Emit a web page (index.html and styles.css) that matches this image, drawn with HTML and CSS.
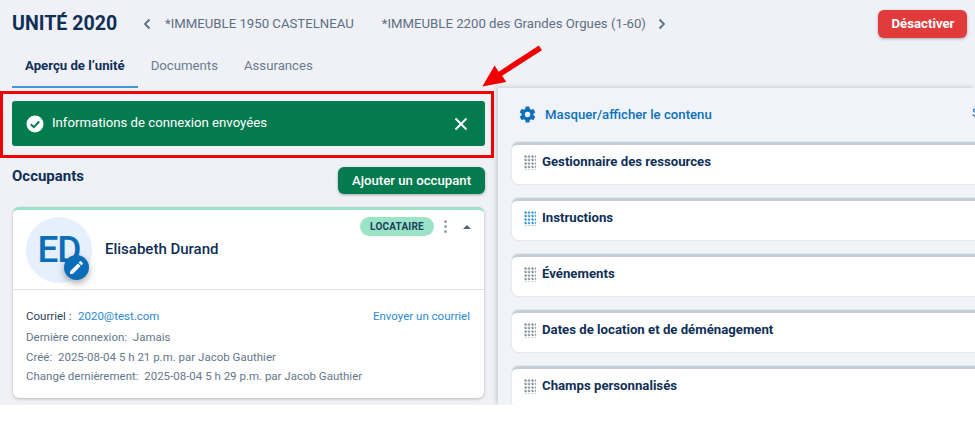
FILE: index.html
```html
<!DOCTYPE html>
<html lang="fr">
<head>
<meta charset="utf-8">
<title>Unité 2020</title>
<link rel="stylesheet" href="styles.css">
</head>
<body>
<div class="page">
  <header class="top">
    <h1 class="title">UNITÉ 2020</h1>
    <svg class="chev chev-l" viewBox="0 0 10 12"><path d="M7.5 1.5 3 6l4.500 4.500" /></svg>
    <span class="crumb crumb-a">*IMMEUBLE 1950 CASTELNEAU</span>
    <span class="crumb crumb-b">*IMMEUBLE 2200 des Grandes Orgues (1-60)</span>
    <svg class="chev chev-r" viewBox="0 0 10 12"><path d="M2.500 1.500 7 6l-4.500 4.500" /></svg>
    <button class="btn-red">Désactiver</button>
  </header>
  <nav class="tabs">
    <a class="tab tab-active">Aperçu de l’unité</a>
    <a class="tab">Documents</a>
    <a class="tab">Assurances</a>
  </nav>
  <main class="main">
    <section class="left">
      <div class="alert">
        <svg class="alert-check" viewBox="0 0 18 18"><circle cx="9" cy="9" r="8.500" fill="#fff"/><path d="M4.800 9.300 7.800 12.200 13.200 6.500" fill="none" stroke="#047a4f" stroke-width="2"/></svg>
        <span class="alert-text">Informations de connexion envoyées</span>
        <svg class="alert-x" viewBox="0 0 14 14"><path d="M1.500 1.500 12.500 12.500M12.500 1.500 1.500 12.500" fill="none" stroke="#fff" stroke-width="2"/></svg>
      </div>
      <div class="occ-head">
        <h2 class="occ-title">Occupants</h2>
        <button class="btn-green">Ajouter un occupant</button>
      </div>
      <article class="card">
        <div class="card-top">
          <div class="avatar">ED
            <span class="edit"><svg viewBox="0 0 24 24"><path fill="#fff" d="M3 17.250V21h3.750L17.810 9.940l-3.750-3.750L3 17.250zM20.710 7.040a1 1 0 0 0 0-1.410l-2.340-2.340a1 1 0 0 0-1.410 0l-1.830 1.830 3.750 3.750 1.830-1.830z"/></svg></span>
          </div>
          <div class="name">Elisabeth Durand</div>
          <div class="card-tools">
            <span class="badge">LOCATAIRE</span>
            <span class="kebab"><i></i><i></i><i></i></span>
            <span class="caret"></span>
          </div>
        </div>
        <div class="card-body">
          <div class="row-mail">
            <span class="mail-label">Courriel :</span>
            <a class="link mail-value">2020@test.com</a>
            <a class="link mail-send">Envoyer un courriel</a>
          </div>
          <div class="meta">Dernière connexion:&nbsp; Jamais</div>
          <div class="meta">Créé:&nbsp; 2025-08-04 5 h 21 p.m. par Jacob Gauthier</div>
          <div class="meta">Changé dernièrement:&nbsp; 2025-08-04 5 h 29 p.m. par Jacob Gauthier</div>
        </div>
      </article>
    </section>
    <section class="right">
      <div class="toggle-row">
        <svg class="gear" viewBox="0 0 24 24"><path fill="#0c6fb8" fill-rule="evenodd" d="M19.430 12.980c.04-.32.070-.64.070-.98s-.03-.66-.07-.98l2.110-1.650c.19-.15.240-.42.120-.64l-2-3.460c-.12-.22-.39-.3-.61-.22l-2.490 1c-.52-.4-1.080-.73-1.690-.98l-.38-2.650A.49.49 0 0 0 14 2h-4c-.25 0-.46.18-.49.42l-.38 2.650c-.61.25-1.170.59-1.690.98l-2.490-1c-.23-.09-.49 0-.61.22l-2 3.460c-.13.22-.07.49.12.64l2.110 1.650c-.04.32-.07.65-.07.98s.03.66.07.98l-2.110 1.650c-.19.15-.24.42-.12.64l2 3.460c.12.22.39.3.61.22l2.490-1c.52.4 1.080.73 1.690.98l.38 2.650c.03.24.24.42.49.42h4c.25 0 .46-.18.49-.42l.38-2.650c.61-.25 1.170-.59 1.690-.98l2.490 1c.23.09.49 0 .61-.22l2-3.460c.12-.22.07-.49-.12-.64l-2.110-1.650zM12 15.500a3.500 3.500 0 1 1 0-7 3.500 3.500 0 0 1 0 7z"/></svg>
        <span class="toggle-text">Masquer/afficher le contenu</span>
        <span class="toggle-extra">S</span>
      </div>
      <div class="panel"><span class="grip"></span><span class="panel-title">Gestionnaire des ressources</span></div>
      <div class="panel"><span class="grip grip-blue"></span><span class="panel-title">Instructions</span></div>
      <div class="panel"><span class="grip"></span><span class="panel-title">Événements</span></div>
      <div class="panel"><span class="grip"></span><span class="panel-title">Dates de location et de déménagement</span></div>
      <div class="panel"><span class="grip"></span><span class="panel-title">Champs personnalisés</span></div>
    </section>
  </main>
  <div class="callout-box"></div>
  <svg class="callout-arrow" viewBox="0 0 70 50"><path fill="#f00000" d="M61.500 0.500 64.800 5.600 21.600 33.400 26 40.300 0 45 13.400 22.200 17.800 29z"/></svg>
</div>
</body>
</html>
```
FILE: styles.css
```css
* { box-sizing: border-box; }
html, body { margin: 0; background: #fff; }
body { font-family: Roboto, "Liberation Sans", sans-serif; }
.page {
  position: relative;
  width: 975px;
  height: 405px;
  overflow: hidden;
  background: #f0f1f6;
  display: flex;
  flex-direction: column;
}
.top {
  height: 47px;
  flex: none;
  display: flex;
  align-items: center;
  padding-left: 12px;
  color: #5d6f83;
}
.title {
  margin: 0;
  font-size: 19.600px;
  line-height: 24px;
  font-weight: 700;
  color: #0f2f57;
  width: 130px;
}
.chev { width: 10px; height: 12px; flex: none; }
.chev path { fill: none; stroke: #5d6f83; stroke-width: 1.800; }
.crumb { font-size: 13.200px; font-weight: 400; line-height: 20px; white-space: nowrap; }
.crumb-a { margin-left: 13px; }
.crumb-b { margin-left: 28px; }
.chev-r { margin-left: 11px; }
.btn-red {
  margin-left: auto;
  margin-right: 8px;
  width: 89px;
  height: 28px;
  border: 0;
  border-radius: 6px;
  padding: 0 0 0 1px;
  background: #e13a3b;
  color: #fff;
  font: 700 13.200px Roboto, sans-serif;
  box-shadow: 0 1px 3px rgba(0,0,0,.3);
}
.tabs {
  height: 41px;
  flex: none;
  display: flex;
  padding-left: 12px;
}
.tab {
  font-size: 13.200px;
  line-height: 20px;
  padding: 9px 13px 0;
  color: #6a7c90;
  height: 41px;
}
.tab-active {
  color: #0f2f57;
  font-weight: 700;
  border-bottom: 2px solid #3f97dc;
}
.main { flex: 1; display: flex; min-height: 0; }
.left { width: 498px; flex: none; padding: 13px 13px 0 12px; }
.alert {
  height: 45px;
  background: #047a4f;
  border-radius: 3px;
  display: flex;
  align-items: center;
  padding: 0 17px 0 14px;
  color: #fff;
}
.alert-check { width: 18px; height: 18px; flex: none; }
.alert-text { margin-left: 8px; font-size: 13.200px; line-height: 18px; flex: 1; margin-top: -1px; }
.alert-x { width: 14px; height: 14px; flex: none; }
.occ-head {
  display: flex;
  justify-content: space-between;
  align-items: flex-start;
  margin-top: 21px;
  height: 40px;
}
.occ-title { margin: 0; font-size: 15px; line-height: 18px; font-weight: 700; color: #0f2f57; }
.btn-green {
  width: 147px;
  height: 27px;
  border: 0;
  border-radius: 6px;
  padding: 0;
  background: #047a4f;
  color: #fff;
  font: 500 13.200px Roboto, sans-serif;
  box-shadow: 0 1px 3px rgba(0,0,0,.3);
}
.card {
  margin-left: 1px;
  margin-right: 1px;
  height: 191px;
  background: #fff;
  border-top: 3px solid #9ae3c6;
  border-radius: 6px;
  box-shadow: 0 1px 3px rgba(0,0,0,.25);
}
.card-top {
  height: 80px;
  border-bottom: 1px solid #dfe1e5;
  display: flex;
  align-items: flex-start;
  position: relative;
  padding: 7px 0 0 13px;
}
.avatar {
  position: relative;
  width: 66px;
  height: 66px;
  flex: none;
  border-radius: 50%;
  background: #e5f0fc;
  color: #0b6cb8;
  font-size: 37px;
  font-weight: 500;
  line-height: 66px;
  text-align: center;
  letter-spacing: -1px;
}
.edit {
  position: absolute;
  left: 38px;
  top: 38px;
  width: 25px;
  height: 25px;
  border-radius: 50%;
  background: #0b6cb8;
  box-shadow: 0 3px 7px rgba(0,0,0,.35);
  display: flex;
  align-items: center;
  justify-content: center;
}
.edit svg { width: 17px; height: 17px; }
.name {
  margin: 23px 0 0 13px;
  font-size: 15px;
  line-height: 18px;
  font-weight: 500;
  color: #0f2f57;
}
.card-tools {
  margin-left: auto;
  display: flex;
  align-items: center;
  height: 19px;
}
.badge {
  width: 74px;
  height: 19px;
  border-radius: 10px;
  background: #9ae3c6;
  color: #1c4060;
  font-size: 10px;
  font-weight: 700;
  line-height: 19px;
  text-align: center;
  letter-spacing: .2px;
}
.kebab { margin-left: 10px; width: 4px; display: flex; flex-direction: column; gap: 2px; }
.kebab i { display: block; width: 3px; height: 3px; border-radius: 50%; background: #9aa5b1; }
.caret {
  margin: 0 13px 0 15px;
  width: 0;
  height: 0;
  border-left: 4px solid transparent;
  border-right: 4px solid transparent;
  border-bottom: 4px solid #4f6478;
}
.card-body { padding: 16px 14px 0 13px; font-size: 11.500px; line-height: 20px; color: #64778b; }
.row-mail { display: flex; height: 21px; }
.mail-label { color: #2f4258; width: 52px; }
.link { color: #2b8ad2; }
.mail-send { margin-left: auto; }
.meta { height: 19.500px; }
.right {
  flex: 1;
  min-width: 0;
  background: #f0f3f8;
  box-shadow: -2px -1px 4px rgba(60,70,90,.2);
  padding: 0 0 0 14px;
  overflow: hidden;
}
.toggle-row {
  height: 54px;
  display: flex;
  align-items: center;
  padding-left: 6px;
  white-space: nowrap;
  position: relative;
}
.gear { width: 19px; height: 19px; flex: none; margin-top: -1px; }
.toggle-text { margin-left: 8px; font-size: 13.200px; font-weight: 500; color: #0c71bd; margin-top: -2px; }
.toggle-extra { position: absolute; left: 460px; top: 17px; font-size: 13.200px; color: #0c71bd; }
.panel {
  width: 480px;
  height: 42px;
  margin-bottom: 14px;
  background: #fff;
  border-top: 3px solid #c5ced8;
  border-radius: 6px 0 0 6px;
  box-shadow: 0 0 2px rgba(0,0,0,.15);
  display: flex;
  align-items: flex-start;
  padding: 8px 0 0 12px;
}
.grip {
  width: 12px;
  height: 15px;
  flex: none;
  margin-top: 2px;
  background-image: radial-gradient(circle at 1.500px 1.500px, #7f8a97 1px, transparent 1.300px);
  background-size: 3.500px 3.500px;
}
.grip-blue { background-image: radial-gradient(circle at 1.500px 1.500px, #2b8ad2 1px, transparent 1.300px); }
.panel-title { margin-left: 6px; font-size: 13.200px; line-height: 18px; font-weight: 700; color: #0f2f57; }
.callout-box {
  position: absolute;
  left: 0;
  top: 91px;
  width: 494px;
  height: 67px;
  border: 3px solid #f00000;
}
.callout-arrow {
  position: absolute;
  left: 482px;
  top: 45px;
  width: 65px;
  height: 46px;
}
```
